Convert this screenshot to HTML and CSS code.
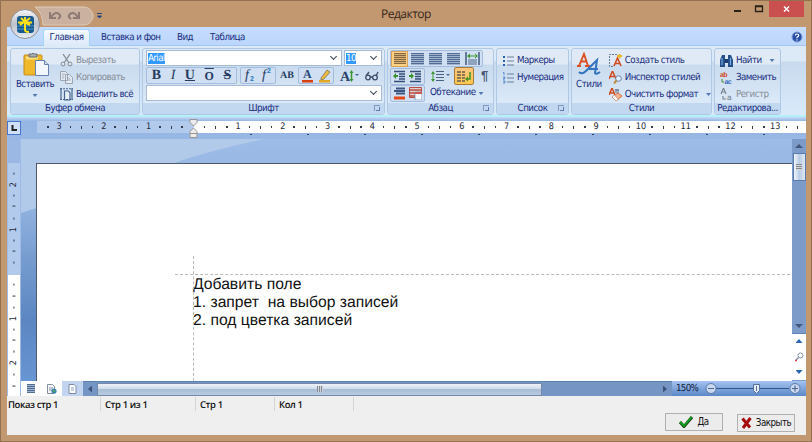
FILE: index.html
```html
<!DOCTYPE html>
<html lang="ru">
<head>
<meta charset="utf-8">
<title>Редактор</title>
<link rel="stylesheet" href="styles.css">
</head>
<body>
<div class="window">
  <header class="titlebar">
    <svg class="quick" width="112" height="27" viewBox="0 0 112 27">
      <path d="M28 6H77a9 9 0 0 1 0 18H36Q36 12 28 6Z" fill="#cbb2a0" stroke="#ddc9b8"/>
      <g fill="none" stroke="#8d7b74" stroke-width="2"><path d="M43 11v6h6M44 16q5-7 9-2q1 2-2 4M72 11v6h-6M71 16q-5-7-9-2q-1 2 2 4"/></g>
      <path d="M90 12.500h5M90.500 15h4l-2 2z" stroke="#27457d" fill="#27457d"/>
    </svg>
    <h1>Редактор</h1>
    <svg class="winbtns" width="76" height="17" viewBox="0 0 76 17">
      <path d="M2 10h7" stroke="#292018" stroke-width="2"/><path d="M23.500 5.500h7v5h-7zM23 5h8" fill="none" stroke="#292018" stroke-width="1.300"/>
      <path d="M37 0h35v16H37z" fill="#c9504e"/><path d="M52 5.500l5 5M57 5.500l-5 5" stroke="#fff" stroke-width="1.500"/>
    </svg>
  </header>
  <svg class="orb" width="32" height="32" viewBox="0 0 32 32">
    <defs><linearGradient id="orb" x2="0" y2="1"><stop stop-color="#f7f7f8"/><stop offset=".5" stop-color="#bcc1cb"/><stop offset="1" stop-color="#e9eef5"/></linearGradient></defs>
    <circle cx="16" cy="16" r="14.500" fill="url(#orb)" stroke="#8c8f99"/>
    <rect x="8" y="8" width="17" height="17" rx="3" fill="#165a8f"/>
    <path d="M8 18h17M8 21h17" stroke="#4c91bc"/>
    <path d="M9 14.500h14M12 10l4 4 5-4M16 9v13q0 2 4 2M11 17l4-3 6 3" fill="none" stroke="#ffe01b" stroke-width="2"/>
  </svg>
  <div class="client">
    <nav class="tabs"><span class="tab active"><b>Главная</b></span><span class="tab t2">Вставка и фон</span><span class="tab t3">Вид</span><span class="tab t4">Таблица</span>
      <svg class="help" width="12" height="12" viewBox="0 0 12 12"><circle cx="6" cy="6" r="5" fill="#294ea6" stroke="#7fa0da"/><path d="M4.300 4.500q0-1.500 1.700-1.500t1.700 1.500q0 1-1.700 1.700v1M6 8.200v1.300" fill="none" stroke="#fff" stroke-width="1.200"/></svg>
    </nav>
    <section class="ribbon">
      <div class="group g1">
        <div class="body">
          <div class="big paste">
            <svg width="27" height="25" viewBox="0 0 27 25"><rect x="1" y="3" width="18" height="20" rx="1" fill="#efb92b" stroke="#c38b1d"/><path d="M3 6h12" stroke="#ffdf7a" stroke-width="3"/><path d="M6 5V2h3q1-2 2 0h3v3z" fill="#a9adb1" stroke="#666e78"/><path d="M12.500 8.500h9l4 4v11h-13z" fill="#f2f7fe" stroke="#6482ad"/><path d="M21.500 8.500v4h4" fill="#cfdcf0" stroke="#6482ad"/></svg>
            <span>Вставить</span><i class="arr"></i>
          </div>
          <div class="list">
            <div class="item off"><svg width="13" height="13" viewBox="0 0 13 13"><path d="M3 0l6 9M10 0L4 9" stroke="#858d97" stroke-width="1.300"/><circle cx="3" cy="10" r="2" fill="none" stroke="#858d97"/><circle cx="10" cy="10" r="2" fill="none" stroke="#858d97"/></svg><span>Вырезать</span></div>
            <div class="item off"><svg width="13" height="13" viewBox="0 0 13 13"><path d="M.5.5h5l2 2v7h-7zM5.500 3.500h4l3 3v6h-7z" fill="#e2e9f2" stroke="#9aa4b2"/><path d="M2 3h3M2 5h2M2 7h2M7 7h3M7 9h4" stroke="#9aa4b2" stroke-width=".8"/></svg><span>Копировать</span></div>
            <div class="item"><svg width="13" height="13" viewBox="0 0 13 13"><path d="M1 0v12M12 0v12M4.500 3h4l1.500 2v7H4.500z" fill="#e6eef8" stroke="#46648f" stroke-width="1.200"/><path d="M0 .8h13M0 11.500h13" stroke="#46648f" stroke-dasharray="2 1"/></svg><span>Выделить всё</span></div>
          </div>
        </div><div class="caption">Буфер обмена</div>
      </div>
      <div class="group g2">
        <div class="body font">
          <div class="row"><div class="combo face"><mark>Arial</mark><i class="chev"></i></div><div class="combo size"><mark>10</mark><i class="chev"></i></div></div>
          <div class="row fmt">
            <div class="set five"><b>B</b><em>I</em><u>U</u><span class="over">O</span><s>S</s></div>
            <div class="set two script"><span><em>f</em><small class="low">2</small></span><span><em>f</em><small>2</small></span></div>
            <span class="ab">AB</span>
            <div class="set two color"><svg width="13" height="14" viewBox="0 0 13 14"><text x="2" y="9" font-family="Liberation Serif" font-weight="bold" font-size="12" fill="#28477a">A</text><path d="M1 11h11v2.500H1z" fill="#d94012"/></svg><svg width="13" height="14" viewBox="0 0 13 14"><path d="M3 9l6-8 3 2-6 7-3 1z" fill="#efbd3a" stroke="#77705e" stroke-width=".8"/><path d="M1 11h11v2.500H1z" fill="#e4a924"/></svg></div>
            <svg class="grow" width="19" height="14" viewBox="0 0 19 14"><text x="0" y="12" font-family="Liberation Serif" font-weight="bold" font-size="14" fill="#2a4269">A</text><path d="M11.500 3v8" stroke="#3c9632" stroke-width="1.500"/><path d="M9.500 4l2-3 2 3zM9.500 10l2 3 2-3z" fill="#3c9632"/><path d="M15 5h4l-2 2z" fill="#45699c"/></svg>
            <svg width="14" height="10" viewBox="0 0 14 10"><g fill="none" stroke="#3a4c6a" stroke-width="1.300"><circle cx="3" cy="6.500" r="2.300"/><circle cx="10" cy="6.500" r="2.300"/><path d="M5 6h3M1 5l3-4M11 5l2-4"/></g></svg>
          </div>
          <div class="combo style"><i class="chev"></i></div>
        </div><div class="caption">Шрифт<i class="launch"></i></div>
      </div>
      <div class="group g3">
        <div class="body para">
          <div class="row"><div class="set align"><i class="lines on"></i><i class="lines center"></i><i class="lines right"></i><i class="lines"></i><svg width="15" height="13" viewBox="0 0 15 13"><path d="M1 0v13M14 0v13" stroke="#3f587f" stroke-width="1.500"/><path d="M3 8h9M3 10h9M3 12h9" stroke="#53698b"/><path d="M2 4l3-2.500v5zM13 4l-3-2.500v5zM4 3.500h7v1H4z" fill="#3c9632"/></svg></div></div>
          <div class="row second"><div class="set ind">
            <svg width="13" height="13" viewBox="0 0 13 13"><path d="M1 1.500h11M6 4h6M6 6.500h6M6 9h6M1 11.500h11" stroke="#334e79" stroke-width="1.300"/><path d="M0 6l3-3v2h2v2H3v2z" fill="#38912b"/></svg>
            <svg width="13" height="13" viewBox="0 0 13 13"><path d="M1 1.500h11M6 4h6M6 6.500h6M6 9h6M1 11.500h11" stroke="#334e79" stroke-width="1.300"/><path d="M5 6L2 3v2H0v2h2v2z" fill="#38912b"/></svg></div>
            <svg class="spacing" width="19" height="13" viewBox="0 0 19 13"><path d="M5 1.500h8M5 4.500h8M5 7.500h8M5 10.500h8" stroke="#4d6180"/><path d="M2 3v7" stroke="#3c9632"/><path d="M0 4l2-3 2 3zM0 9l2 3 2-3z" fill="#3c9632"/><path d="M15 4h4l-2 2z" fill="#45699c"/></svg>
            <span class="hot"><svg width="15" height="13" viewBox="0 0 15 13"><path d="M1 2h4M1 5h4M1 8h4M1 11h4M6 2h3M6 5h3M6 8h3M6 11h3" stroke="#665d50" stroke-width="1.700"/><path d="M14 2v7h-2" fill="none" stroke="#409428" stroke-width="1.500"/><path d="M9 9l3-2.500v5z" fill="#409428"/></svg></span>
            <span class="pil">¶</span></div>
          <div class="row third"><div class="set ind">
            <svg width="13" height="13" viewBox="0 0 13 13"><path d="M3 1.500h9M1 4h11M3 6.500h9" stroke="#3b5680" stroke-width="2"/><path d="M1 9.500h11v3H1z" fill="#e44a17"/></svg>
            <svg width="13" height="13" viewBox="0 0 13 13"><path d="M.5.500h12v10H.5z" fill="#e3cfcd" stroke="#b84d43"/><path d="M0 3h12M0 6h12M0 9h12" stroke="#b84d43" stroke-width="1.500"/><path d="M6 5h7v8H6z" fill="#f5f8fc" stroke="#7085a5" stroke-width=".7"/><path d="M6 5h7v2H6z" fill="#cf5a50"/></svg></div>
            <span class="wrap">Обтекание</span><i class="arr"></i></div>
        </div><div class="caption">Абзац<i class="launch"></i></div>
      </div>
      <div class="group g4">
        <div class="body"><div class="list">
          <div class="item"><svg width="12" height="12" viewBox="0 0 12 12"><path d="M5 2h7M5 6h7M5 10h7" stroke="#687f9f"/><path d="M1 1h2v2H1zM1 5h2v2H1zM1 9h2v2H1z" fill="#255fb4"/></svg><span>Маркеры</span></div>
          <div class="item"><svg width="12" height="12" viewBox="0 0 12 12"><path d="M5 2h7M5 6h7M5 10h7" stroke="#687f9f"/><path d="M1 .500h1V3M1 5h2v1L1 7h2M1 9h2v2H1" fill="none" stroke="#4b82c7" stroke-width=".9"/></svg><span>Нумерация</span></div>
        </div></div><div class="caption">Список<i class="launch"></i></div>
      </div>
      <div class="group g5">
        <div class="body">
          <div class="big styl"><svg width="26" height="25" viewBox="0 0 26 25"><g fill="none"><path d="M1 14h4M9 14h5M3 14L8 2l4 12M5 9.500h5" stroke="#d95124" stroke-width="1.900"/><path d="M3 20q3 3 7-1L21 8l-2 13q1 2 5-1M13 17h9" stroke="#3473bd" stroke-width="2"/></g></svg><span>Стили</span></div>
          <div class="list">
            <div class="item"><svg width="13" height="13" viewBox="0 0 13 13"><path d="M8 .500H.5v12H5" fill="none" stroke="#6a7b95" stroke-dasharray="2 1"/><path d="M5 12L8.500 4 12 12M6 9.500h5" fill="none" stroke="#cf4a20" stroke-width="1.600"/><path d="M8 2h5M10.500 0v4.500" stroke="#e7b530" stroke-width="1.800"/></svg><span>Создать стиль</span></div>
            <div class="item"><svg width="13" height="13" viewBox="0 0 13 13"><path d="M0 8L3.500 0 7 8M1.500 5.500h4" fill="none" stroke="#cf4a20" stroke-width="1.500"/><circle cx="9.500" cy="7.500" r="2.800" fill="#e6f2ff" stroke="#6781a5"/><path d="M7.500 9.500L5 12.500" stroke="#c38b3a" stroke-width="2"/></svg><span>Инспектор стилей</span></div>
            <div class="item"><svg width="13" height="13" viewBox="0 0 13 13"><path d="M0 7L3 0l3 7M1 5h4" fill="none" stroke="#cf4a20" stroke-width="1.500"/><path d="M7 1v4M9 1v4M6 2h4" stroke="#61718d"/><path d="M3 9l6-4 4 3-6 5z" fill="#f2b393" stroke="#d96b3d"/><path d="M3 9l4 4 2-1.500L5.500 7z" fill="#fff" stroke="#a58a80" stroke-width=".5"/></svg><span>Очистить формат</span><i class="arr"></i></div>
          </div>
        </div><div class="caption">Стили</div>
      </div>
      <div class="group g6">
        <div class="body"><div class="list">
          <div class="item"><svg width="13" height="13" viewBox="0 0 13 13"><path d="M0 13V6l2-5h3v12zM13 13V6l-2-5H8v12z" fill="#254f89"/><path d="M5 5h3v4H5z" fill="#1b3c6e"/><path d="M2 4v7M10.500 4v7" stroke="#76acdf" stroke-width="1.200"/></svg><span>Найти</span><i class="arr"></i></div>
          <div class="item"><svg width="13" height="13" viewBox="0 0 13 13"><text x="0" y="6" font-family="Liberation Sans" font-weight="bold" font-size="7" fill="#ce4a28">ab</text><text x="4.500" y="12.500" font-family="Liberation Sans" font-size="7" font-weight="bold" fill="#3469b7">ac</text><path d="M2 8v3h2" fill="none" stroke="#3d8c2f"/></svg><span>Заменить</span></div>
          <div class="item off"><svg width="13" height="13" viewBox="0 0 13 13"><path d="M1 6L3.500 0 6 6M2 4h3M3 8v3h3" fill="none" stroke="#7d858f" stroke-width="1.200"/><text x="7" y="12" font-family="Liberation Sans" font-size="8" fill="#697382">a</text></svg><span>Регистр</span></div>
        </div></div><div class="caption">Редактирова...</div>
      </div>
    </section>
    <main class="workspace">
      <div class="ruler-row"><span class="corner"><svg width="14" height="14" viewBox="0 0 14 14"><rect x=".5" y=".5" width="13" height="13" fill="#cfe0f7" stroke="#4876cf"/><path d="M5.500 4v5H10" fill="none" stroke="#222" stroke-width="2"/></svg></span>
        <div class="hruler" id="hruler"></div>
        <svg class="marker" width="9" height="20" viewBox="0 0 9 20"><path d="M1 .500h7v3L4.500 7 1 3.500zM4.500 9L8 12.500v6H1v-6zM1 14.500h7" fill="#ececec" stroke="#969696"/></svg>
        <div class="stops"><i></i><i></i><i></i><i></i><i></i><i></i><i></i><i></i><i></i><i></i></div>
      </div>
      <div class="middle">
        <div class="vruler" id="vruler"></div>
        <div class="canvas"><svg class="swoosh" width="250" height="242" viewBox="0 0 250 242"><path d="M0 0h243Q190 11 150 25L0 74z" fill="#b2caea"/></svg>
          <div class="page"><div class="doc">Добавить поле<br>1. запрет&nbsp; на выбор записей<br>2. под цветка записей</div></div>
        </div>
        <div class="side">
          <div class="vscroll"><i class="tri up"></i><div class="vthumb"><i></i></div><i class="tri down"></i></div>
          <div class="browse"><i class="tri up blue"></i><svg width="10" height="10" viewBox="0 0 10 10"><circle cx="6.500" cy="3.500" r="2.500" fill="#fff" stroke="#8491a8"/><path d="M4.500 5.500L2 8" stroke="#8290a8" stroke-width="1.500"/><path d="M1 8.500h2" stroke="#d44" stroke-width="1.500"/></svg><i class="tri down blue"></i></div>
        </div>
      </div>
      <div class="bottom">
        <div class="vtail" id="vtail"></div>
        <div class="views"><span><i class="lines grey"></i></span><span><svg width="10" height="10" viewBox="0 0 10 10"><path d="M.5.500h5l2 2v7h-7z" fill="#f2f5f9" stroke="#8390a3"/><path d="M2 4h4M2 6h3" stroke="#8390a3"/><circle cx="7" cy="7" r="2.600" fill="#3a83b8"/><path d="M6 6l2 2" stroke="#55a94c" stroke-width="1.500"/></svg></span><span class="sel"><svg width="9" height="10" viewBox="0 0 9 10"><path d="M1 .500h5l2 2v7H1z" fill="#fff" stroke="#7c8ca6"/><path d="M3 4h3M3 6h3" stroke="#8da0bc"/></svg></span></div>
        <div class="hscroll"><i class="tl"></i><div class="hthumb"><i></i></div><i class="tr"></i></div>
        <div class="zoom"><span>150%</span>
          <svg width="98" height="13" viewBox="0 0 98 13"><path d="M12 6.500h73" stroke="#35568c"/><circle cx="7" cy="6.500" r="5" fill="#c9d8ee" stroke="#5d7caf"/><circle cx="91" cy="6.500" r="5" fill="#c9d8ee" stroke="#5d7caf"/><path d="M4 6.500h6M88 6.500h6M91 3.500v6" stroke="#506a94" stroke-width="1.200"/><path d="M49.500 2.500h6v6l-3 3-3-3z" fill="#e3ebf7" stroke="#57719c"/><path d="M52.500 4v5" stroke="#57719c"/></svg></div>
      </div>
    </main>
    <div class="status"><span>Показ стр 1</span><span>Стр 1 из 1</span><span class="s3">Стр 1</span><span class="s4">Кол 1</span></div>
    <footer class="actions">
      <button class="ok"><svg width="14" height="12" viewBox="0 0 14 12"><path d="M1 6l4 4.500L13 1" fill="none" stroke="#17451a" stroke-width="3"/><path d="M1 6l4 4L12.500 1" fill="none" stroke="#12a31c" stroke-width="1.800"/></svg>Да</button>
      <button class="close"><svg width="11" height="12" viewBox="0 0 11 12"><path d="M1.500 1.500L9 10.500M9.500 1L2 11" stroke="#a50c0c" stroke-width="3"/></svg>Закрыть</button>
    </footer>
  </div>
</div>
<script src="ruler.js"></script>
</body>
</html>
```
FILE: styles.css
```css
* { box-sizing: border-box; }
body { margin: 0; overflow: hidden; font: 9.700px/12px "DejaVu Sans Condensed", sans-serif; color: #182c80; text-rendering: geometricPrecision; }
svg { display: block; flex: none; }
i { flex: none; }
.window { position: relative; width: 812px; height: 442px; background: #c29870; border: 1px solid #93704f; padding: 0 5px 6px 6px; }
.titlebar { height: 26px; display: flex; }
h1 { flex: 1; margin: 0; padding: 5px 0 0 262px; font: 12px/15px "Open Sans", sans-serif; letter-spacing: -.5px; color: #35261a; }
.winbtns { margin-right: -2px; }
.orb { position: absolute; left: 8px; top: 7px; z-index: 2; }
.client { height: 408px; background: #efefef; }

.tabs { height: 19px; display: flex; padding-left: 36px; background: linear-gradient(#c4dcff, #bcd6fb); border-bottom: 1px solid #a5c6ef; }
.tab { padding-top: 5px; height: 19px; letter-spacing: -.55px; white-space: nowrap; }
.tab b { font-weight: normal; }
.active { width: 47px; margin-top: 2px; height: 17px; padding-top: 2px; text-align: center; background: linear-gradient(#f6faff, #dbe9f8); border: 1px solid #a2d5f5; border-bottom: 0; border-radius: 3px 3px 0 0; }
.t2 { margin-left: 11px; width: 76px; }
.t3 { width: 33px; }
.help { margin: 4px 3px 0 auto; }

.ribbon { height: 71px; display: flex; gap: 2px; padding: 2px 3px; background: linear-gradient(#dce9f7 0 15px, #c9daee 16px, #d9eafb); border-bottom: 2px solid #b5f0f8; }
.group { flex: none; height: 67px; display: flex; flex-direction: column; border: 1px solid #afc8e3; border-radius: 3px; background: linear-gradient(#e0eaf6 0 15px, #c9dbee 16px, #dbe9f8 54px); overflow: hidden; }
.g1 { width: 130px; } .g2 { width: 243px; } .g3 { width: 107px; } .g4 { width: 73px; } .g5 { width: 141px; } .g6 { width: 67px; }
.body { height: 54px; display: flex; flex: none; }
.caption { height: 12px; position: relative; background: #c2d8f1; text-align: center; line-height: 11px; letter-spacing: -.5px; white-space: nowrap; }
.launch { position: absolute; right: 4px; top: 2px; width: 6px; height: 6px; border: solid #8299bd; border-width: 1px 0 0 1px; }
.launch::after { content: ""; position: absolute; right: 0; bottom: 0; width: 3px; height: 3px; border: solid #5f7cae; border-width: 0 1px 1px 0; }
.big { display: flex; flex-direction: column; align-items: center; letter-spacing: -.5px; padding-top: 3px; }
.paste { width: 48px; } .paste span { margin-top: 2px; } .paste svg { margin-left: 3px; }
.styl { width: 36px; } .styl span { margin-top: 2px; }
.arr { width: 5px; height: 3px; background: #5579b2; clip-path: polygon(0 0, 100% 0, 50% 100%); }
.paste .arr { margin-top: 3px; }
.list { padding-top: 3px; }
.item { height: 17px; display: flex; align-items: center; gap: 3px; letter-spacing: -.55px; white-space: nowrap; }
.item .arr { margin-left: 5px; }
.off { color: #858d98; }
.g1 .list { margin-left: 1px; }
.g4 .list { padding-left: 5px; } .g5 .list { padding-left: 3px; } .g6 .list { padding-left: 5px; }

.row { display: flex; align-items: center; }
.font { flex-direction: column; padding: 1px 2px 0 3px; }
.combo { height: 16px; background: #fff; border: 1px solid #a7bad6; display: flex; align-items: center; padding: 0 4px 0 1px; }
.face { width: 196px; } .size { width: 38px; margin-left: 2px; } .style { width: 236px; }
mark { background: #3399ff; color: #fff; line-height: 11px; letter-spacing: -.6px; }
.chev { width: 5px; height: 5px; border: solid #3a4453; border-width: 0 1.5px 1.5px 0; margin: -3px 1px 0 auto; transform: rotate(45deg); }
.fmt { height: 19px; font: 14px/16px "Liberation Serif", serif; color: #263c62; }
.set { display: flex; align-items: center; justify-content: space-around; height: 17px; border: 1px solid #a3bbdc; border-radius: 2px; background: #d0e0f2; }
.five { width: 91px; font-weight: bold; } .five em { font-weight: normal; }
.over { text-decoration: overline; font-size: 12px; }
.fmt > .two { width: 36px; margin-left: 3px; }
.script span { display: flex; align-items: center; height: 15px; line-height: 15px; }
small { font: bold 7px/7px "Liberation Sans", sans-serif; color: #237bc1; align-self: flex-start; margin-left: 1px; }
.low { align-self: flex-end; }
.fmt > .ab { width: 22px; text-align: center; font-size: 10px; font-weight: bold; }
.fmt > .color { margin-left: 0; width: 36px; }
.grow { margin: 0 6px 0 6px; }
.para { flex-direction: column; padding: 1px 2px; }
.align { width: 93px; height: 17px; justify-content: flex-start; gap: 5px; }
.para .row { height: 17.500px; }
.lines { width: 13px; height: 12px; background: repeating-linear-gradient(#526c94 0 1px, #9fb3cf 1px 2px); }
.lines.on { width: 17px; height: 16px; margin-right: -2px; border: 1px solid #d7a35d; background: repeating-linear-gradient(#836a44 0 1px, #d8ad6b 1px 2px) center/12px 11px no-repeat, #ffd182; }
.ind { width: 35px; }
.spacing { margin: 0 2px 0 6px; }
.hot { width: 20px; height: 18px; padding: 2px 1px; margin: 0 7px 0 2px; border: 1px solid #a77b3a; background: linear-gradient(#fbc47e, #ffc74c); border-radius: 2px; }
.pil { font: bold 13px/14px "Liberation Sans", sans-serif; color: #4a5874; }
.wrap { margin: 0 3px 0 5px; letter-spacing: -.5px; }

.workspace { height: 279px; background: linear-gradient(#9abbe5, #9bb9e4 25%, #5c88c3 75%, #6a98d7); }
.ruler-row { position: relative; height: 22px; display: flex; padding-top: 4px; background: linear-gradient(#c5daf6, #95b6e4 4px, #98b7e4); }
.corner { width: 30px; }
.hruler { flex: 1; height: 12px; display: flex; overflow: hidden; padding-left: 5.400px; background: linear-gradient(90deg, #b2cbed 157px, #fff 157px); }
.marker { position: absolute; left: 182px; top: 2px; }
.stops { position: absolute; left: 243px; top: 17px; display: flex; gap: 55px; }
.stops i { width: 2px; height: 1px; background: #34435c; }
.mark { flex: none; display: flex; align-items: center; justify-content: center; font: 9px/10px "DejaVu Sans Condensed", sans-serif; color: #202838; }
.hruler .mark { width: 11.190px; }
.dot::after { content: ""; width: 1.500px; height: 1.500px; background: #333c4c; }
.half::after { content: ""; width: 1px; height: 3px; background: #333c4c; }
.middle { height: 242px; display: flex; }
.vruler { width: 14px; padding-top: 29px; overflow: hidden; border: solid #9dbbe6; border-width: 0 1px; background: linear-gradient(#9ab8e3 24px, #b2cbed 24px 136px, #fff 136px); }
.vruler .mark, .vtail .mark { height: 11.150px; transform: rotate(-90deg); }
.vtail { width: 14px; background: #fff; border: solid #9dbbe6; border-width: 0 1px; overflow: hidden; }
.canvas { position: relative; width: 771px; padding: 24px 0 0 15px; background: linear-gradient(#9dbce7, #94b5e2 25%, #769ccf 50%, #5b86c2 75%, #6895d3); overflow: hidden; }
.swoosh { position: absolute; left: 0; top: 0; }
.page { position: relative; height: 218px; border: solid #50586a; border-width: 1px 0 0 1px; padding: 112px 0 0 156px; background: #fff; }
.page::before { content: ""; position: absolute; left: 138px; right: 2px; top: 110px; border-top: 1px dashed #bbb; }
.page::after { content: ""; position: absolute; left: 156px; top: 92px; bottom: 0; border-left: 1px dashed #bbb; }
.doc { font: 15.700px/18px "Liberation Sans", sans-serif; color: #111; white-space: nowrap; }
.side { width: 14px; display: flex; flex-direction: column; }
.vscroll { height: 195px; background: #7c9bc8; display: flex; flex-direction: column; align-items: center; border-bottom: 1px solid #5e83bd; }
.tri { width: 8px; height: 4px; background: #42567e; }
.up { clip-path: polygon(50% 0, 100% 100%, 0 100%); } .down { clip-path: polygon(0 0, 100% 0, 50% 100%); }
.vscroll .up { margin: 5px 0; } .vscroll .down { margin: auto 0 5px; }
.vthumb { width: 13px; height: 28px; border: 1px solid #587bae; background: linear-gradient(90deg, #f2f5fa, #b9cce5 50%, #dfe8f3); display: grid; place-items: center; }
.vthumb i { width: 6px; height: 6px; background: repeating-linear-gradient(#888 0 1px, #d2d7df 1px 2px); }
.browse { height: 47px; background: #fff; display: flex; flex-direction: column; align-items: center; justify-content: space-between; padding: 5px 0 6px; border-bottom: 1px solid #799dcd; }
.blue { background: #2765b4; width: 7px; }
.bottom { height: 15px; display: flex; }
.views { display: flex; width: 62px; background: #fff; }
.views span { flex: 1; display: grid; place-items: center; }
.views .sel { background: #c2d4f0; }
.grey { width: 8px; height: 9px; }
.hscroll { width: 589px; display: flex; align-items: center; background: #7596c4; border-top: 1px solid #5d80b3; }
.tl { width: 4px; height: 7px; margin: 0 5px; background: #3e5378; clip-path: polygon(100% 0, 100% 100%, 0 50%); }
.tr { width: 4px; height: 7px; margin: 0 5px 0 auto; background: #3e5378; clip-path: polygon(0 0, 100% 50%, 0 100%); }
.hthumb { width: 445px; height: 13px; display: grid; place-items: center; border: 1px solid #7589ab; background: linear-gradient(#edf2f7, #d1dbe8 45%, #a8bed6 50%, #b8cbe0); }
.hthumb i { width: 6px; height: 6px; background: repeating-linear-gradient(90deg, #818890 0 1px, #cfd6de 1px 2px); }
.zoom { flex: 1; display: flex; align-items: center; background: linear-gradient(#a4c3ef, #5b88c7); color: #14203c; }
.zoom span { width: 28px; margin-left: 4px; letter-spacing: -.7px; }
.status { height: 18px; display: flex; padding: 1px 0 3px 1px; font: 600 9.500px/15px "Open Sans", sans-serif; letter-spacing: -.4px; color: #111; }
.status span { width: 93px; border-right: 1px solid #d5d5d5; white-space: nowrap; }
.status span + span { padding-left: 4px; width: 95px; }
.status .s3, .status .s4 { width: 79px; }
.actions { height: 21px; display: flex; justify-content: flex-end; align-items: flex-start; padding-right: 11px; gap: 14px; }
button { display: flex; align-items: center; justify-content: center; gap: 4px; padding: 0; background: #ececec; border: 1px solid #b0b0b0; font: 9.700px/12px "DejaVu Sans Condensed", sans-serif; letter-spacing: -.5px; color: #111; }
.ok { width: 58px; height: 18px; margin-top: -1px; }
.close { width: 58px; height: 18px; }
```
FILE: ruler.js
```javascript
// Four divisions per unit; whole units carry their number.
function fill(id, from, to) {
  const ruler = document.getElementById(id);
  for (let k = from; k <= to; k++) {
    const mark = document.createElement("span");
    mark.className = "mark";
    if (k % 4 !== 0) mark.classList.add(k % 2 === 0 ? "half" : "dot");
    else if (k !== 0) mark.textContent = Math.abs(k) / 4;
    ruler.appendChild(mark);
  }
}
fill("hruler", -13, 54);
fill("vruler", -9, 9);
fill("vtail", 10, 10);
```
